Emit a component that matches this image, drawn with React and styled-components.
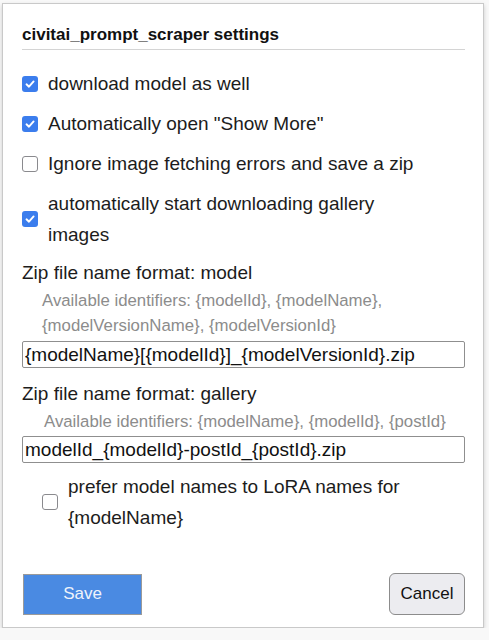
import React from "react";
import styled, { createGlobalStyle } from "styled-components";

const GlobalStyle = createGlobalStyle`
  html, body {
    margin: 0;
    padding: 0;
    background: #f8f8f8;
    font-family: "Liberation Sans", Arial, sans-serif;
    color: #1c1c1c;
  }
`;

const Dialog = styled.div`
  box-sizing: border-box;
  margin: 3px 5px 0 2px;
  width: 482px;
  height: 625px;
  background: #fff;
  border: 1px solid #c9c9c9;
  box-shadow: 0 2px 4px rgba(0, 0, 0, 0.18);
  padding: 21px 18px 12px 19px;
  display: flex;
  flex-direction: column;
`;

const Title = styled.h1`
  margin: 0;
  font-size: 17px;
  font-weight: 700;
  line-height: 20px;
  padding-bottom: 4px;
  border-bottom: 1px solid #d4d4d4;
  color: #111;
`;

const Options = styled.div`
  margin-top: ${(p) => p.$top}px;
  display: flex;
  flex-direction: column;
  gap: 9px;
`;

const Row = styled.label`
  display: flex;
  align-items: center;
  gap: 10px;
  padding-left: ${(p) => p.$indent || 0}px;
  font-size: 19px;
  line-height: 31px;
`;

const Box = styled.span`
  flex: none;
  box-sizing: border-box;
  width: 16px;
  height: 16px;
  border-radius: 3px;
  display: flex;
  align-items: center;
  justify-content: center;
  background: ${(p) => (p.$checked ? "#3b7ded" : "#fff")};
  border: ${(p) => (p.$checked ? "none" : "1.5px solid #8a8a8e")};
`;

const Field = styled.div`
  margin-top: ${(p) => p.$top}px;
  display: flex;
  flex-direction: column;
`;

const Label = styled.div`
  font-size: 19px;
  line-height: 31px;
`;

const Hint = styled.div`
  padding-left: ${(p) => p.$indent || 20}px;
  font-size: 16.8px;
  line-height: 25px;
  color: #8c8c8c;
`;

const Input = styled.input`
  box-sizing: border-box;
  margin-top: ${(p) => p.$top || 2}px;
  width: 443px;
  height: 27px;
  padding: 0 2px;
  border: 1px solid #8f8f8f;
  border-radius: 2px;
  font-family: "Liberation Sans", Arial, sans-serif;
  font-size: 19px;
  color: #111;
  outline: none;
`;

const Footer = styled.div`
  margin-top: auto;
  display: flex;
  justify-content: space-between;
  align-items: center;
  width: 443px;
`;

const SaveButton = styled.button`
  box-sizing: border-box;
  width: 119px;
  height: 41px;
  margin-left: 1px;
  background: #4a8ae2;
  border: 1px solid #9a9a9a;
  color: #eef3fb;
  font-family: "Liberation Sans", Arial, sans-serif;
  font-size: 17px;
`;

const CancelButton = styled.button`
  box-sizing: border-box;
  width: 76px;
  height: 42px;
  background: #ececf0;
  border: 1px solid #8c8c8c;
  border-radius: 6px;
  color: #111;
  font-family: "Liberation Sans", Arial, sans-serif;
  font-size: 17px;
`;

const Check = ({ checked }) => (
  <Box $checked={checked}>
    {checked && (
      <svg width="12" height="12" viewBox="0 0 12 12">
        <path
          d="M2.5 6.3 L5 8.7 L9.6 3.4"
          fill="none"
          stroke="#fff"
          strokeWidth="1.9"
          strokeLinecap="round"
          strokeLinejoin="round"
        />
      </svg>
    )}
  </Box>
);

const options = [
  { text: ["download model as well"], checked: true },
  { text: ['Automatically open "Show More"'], checked: true },
  { text: ["Ignore image fetching errors and save a zip"], checked: false },
  { text: ["automatically start downloading gallery", "images"], checked: true },
];

const Lines = ({ lines }) => (
  <span>
    {lines.map((l, i) => (
      <React.Fragment key={l}>
        {i > 0 && <br />}
        {l}
      </React.Fragment>
    ))}
  </span>
);

export default function App() {
  return (
    <>
      <GlobalStyle />
      <Dialog>
        <Title>civitai_prompt_scraper settings</Title>
        <Options $top={18}>
          {options.map((o) => (
            <Row key={o.text[0]}>
              <Check checked={o.checked} />
              <Lines lines={o.text} />
            </Row>
          ))}
        </Options>
        <Field $top={7}>
          <Label>Zip file name format: model</Label>
          <Hint>
            Available identifiers: {"{modelId}"}, {"{modelName}"},
            <br />
            {"{modelVersionName}"}, {"{modelVersionId}"}
          </Hint>
          <Input $top={3} defaultValue="{modelName}[{modelId}]_{modelVersionId}.zip" />
        </Field>
        <Field $top={10}>
          <Label>Zip file name format: gallery</Label>
          <Hint $indent={22}>
            Available identifiers: {"{modelName}"}, {"{modelId}"}, {"{postId}"}
          </Hint>
          <Input $top={2} defaultValue="modelId_{modelId}-postId_{postId}.zip" />
        </Field>
        <Options $top={8}>
          <Row $indent={20}>
            <Check checked={false} />
            <Lines lines={["prefer model names to LoRA names for", "{modelName}"]} />
          </Row>
        </Options>
        <Footer>
          <SaveButton>Save</SaveButton>
          <CancelButton>Cancel</CancelButton>
        </Footer>
      </Dialog>
    </>
  );
}
